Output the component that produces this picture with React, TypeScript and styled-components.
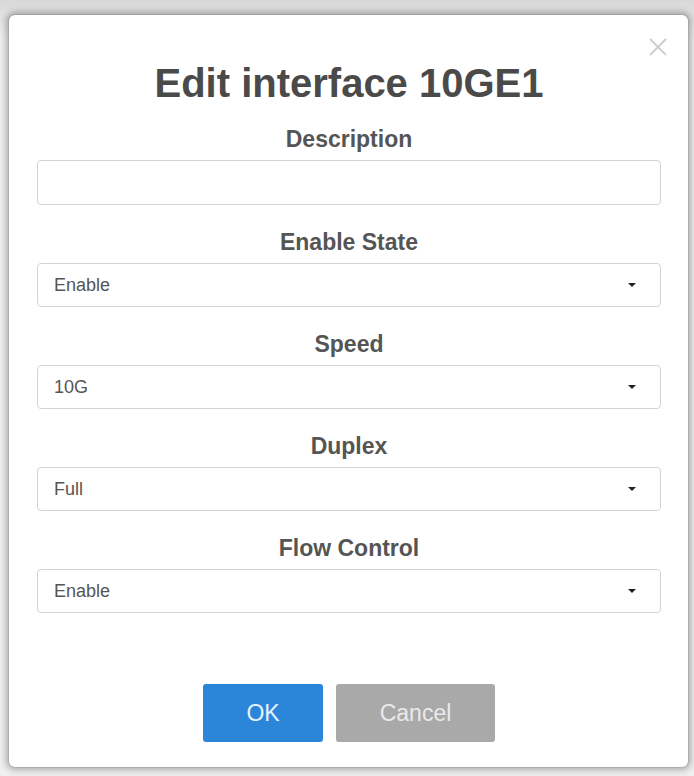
import React, { useState } from "react";
import styled, { createGlobalStyle } from "styled-components";

const GlobalStyle = createGlobalStyle`
  html, body {
    margin: 0;
    padding: 0;
    background: #ececec;
    font-family: "Liberation Sans", Arial, sans-serif;
  }
`;

const Page = styled.div`
  box-sizing: border-box;
  width: 694px;
  height: 776px;
  padding: 15px 6px 9px 9px;
  background: linear-gradient(#d8d8d8, #efefef 40px, #efefef);
`;

const Modal = styled.div`
  position: relative;
  box-sizing: border-box;
  height: 100%;
  background: #fff;
  border-radius: 6px;
  box-shadow: 0 0 0 1px rgba(0, 0, 0, 0.08), 0 0 6px 3px rgba(0, 0, 0, 0.28);
  padding: 45px 27px 0 28px;
  display: flex;
  flex-direction: column;
`;

const CloseButton = styled.button`
  position: absolute;
  top: 20px;
  right: 18px;
  border: none;
  background: none;
  padding: 0;
  width: 24px;
  height: 24px;
  cursor: pointer;
`;

const Title = styled.h2`
  margin: 0 0 21px;
  text-align: center;
  font-size: 40px;
  line-height: 46px;
  font-weight: 700;
  color: #4a4a4a;
`;

const Group = styled.div`
  display: flex;
  flex-direction: column;
  margin-bottom: 25px;
`;

const Label = styled.label`
  text-align: center;
  font-size: 23px;
  line-height: 24px;
  font-weight: 700;
  color: #555;
  margin-bottom: 9px;
`;

const TextInput = styled.input`
  box-sizing: border-box;
  height: 45px;
  border: 1px solid #d4d4d4;
  border-radius: 4px;
  padding: 0 16px;
  font-family: inherit;
  font-size: 18px;
  color: #555;
  outline: none;
`;

const SelectBox = styled.div`
  position: relative;
  display: flex;
  align-items: center;
  box-sizing: border-box;
  height: 44px;
  border: 1px solid #d4d4d4;
  border-radius: 4px;
  padding: 0 16px;
`;

const NativeSelect = styled.select`
  appearance: none;
  position: absolute;
  inset: 0;
  opacity: 0;
  cursor: pointer;
`;

const SelectValue = styled.span`
  flex: 1;
  font-size: 18px;
  color: #555;
`;

const Caret = styled.span`
  width: 0;
  height: 0;
  margin-right: 8px;
  border-left: 4px solid transparent;
  border-right: 4px solid transparent;
  border-top: 4px solid #222;
`;

const Footer = styled.div`
  display: flex;
  justify-content: center;
  gap: 13px;
  margin-top: 46px;
`;

const Button = styled.button<{ $primary?: boolean }>`
  height: 58px;
  width: ${p => (p.$primary ? "120px" : "159px")};
  border: none;
  border-radius: 3px;
  font-family: inherit;
  font-size: 23px;
  background: ${p => (p.$primary ? "#2b86da" : "#a9a9a9")};
  color: ${p => (p.$primary ? "#e6f3ff" : "#e9e9e9")};
  cursor: pointer;
`;

interface SelectFieldProps {
  label: string;
  options: string[];
}

const SelectField = ({ label, options }: SelectFieldProps) => {
  const [value, setValue] = useState(options[0]);
  return (
    <Group>
      <Label>{label}</Label>
      <SelectBox>
        <SelectValue>{value}</SelectValue>
        <Caret />
        <NativeSelect value={value} onChange={e => setValue(e.target.value)}>
          {options.map(o => (
            <option key={o} value={o}>{o}</option>
          ))}
        </NativeSelect>
      </SelectBox>
    </Group>
  );
};

const App = () => {
  const [description, setDescription] = useState("");

  return (
    <Page>
      <GlobalStyle />
      <Modal>
        <CloseButton aria-label="Close">
          <svg width="24" height="24" viewBox="0 0 24 24">
            <path d="M4 4 L20 20 M20 4 L4 20" stroke="#cfcfcf" strokeWidth="2" fill="none" />
          </svg>
        </CloseButton>
        <Title>Edit interface 10GE1</Title>
        <Group>
          <Label>Description</Label>
          <TextInput value={description} onChange={e => setDescription(e.target.value)} />
        </Group>
        <SelectField label="Enable State" options={["Enable", "Disable"]} />
        <SelectField label="Speed" options={["10G", "1G", "Auto"]} />
        <SelectField label="Duplex" options={["Full", "Half"]} />
        <SelectField label="Flow Control" options={["Enable", "Disable"]} />
        <Footer>
          <Button $primary>OK</Button>
          <Button>Cancel</Button>
        </Footer>
      </Modal>
    </Page>
  );
};

export default App;
